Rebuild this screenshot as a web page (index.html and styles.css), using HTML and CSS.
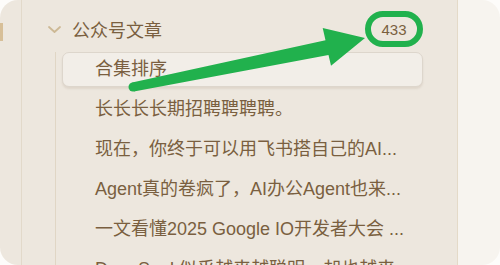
FILE: index.html
```html
<!DOCTYPE html>
<html lang="zh">
<head>
<meta charset="utf-8">
<title>公众号文章</title>
<link rel="stylesheet" href="styles.css">
</head>
<body>
<div class="window">
  <aside class="sidebar">
    <div class="rail"><span class="rail-mark"></span></div>
    <div class="tree">
      <div class="group-head">
        <svg class="chevron" width="13" height="7" viewBox="0 0 13 7"><polyline points="1,1 6.5,6 12,1" fill="none" stroke="#cdb995" stroke-width="1.8" stroke-linecap="round" stroke-linejoin="round"/></svg>
        <span class="group-title">公众号文章</span>
        <span class="count">433</span>
      </div>
      <ul class="children">
        <li class="item selected">合集排序</li>
        <li class="item">长长长长期招聘聘聘聘。</li>
        <li class="item">现在，你终于可以用飞书搭自己的AI...</li>
        <li class="item">Agent真的卷疯了，AI办公Agent也来...</li>
        <li class="item">一文看懂2025 Google IO开发者大会 ...</li>
        <li class="item">DeepSeek似乎越来越聪明，却也越来...</li>
      </ul>
    </div>
  </aside>
  <div class="main"></div>
  <svg class="annotation" width="500" height="265" viewBox="0 0 500 265">
    <rect x="368" y="14" width="52" height="30" rx="15" ry="15" fill="none" stroke="#21b14d" stroke-width="6"/>
    <path d="M132.1,82.6 L325.5,40.3 L322.7,28 L365,38 L331,65.7 L328.5,54.9 L133.9,91.4 Z" fill="#21b14d"/>
    <circle cx="133" cy="87" r="4.5" fill="#21b14d"/>
  </svg>
</div>
</body>
</html>
```

FILE: styles.css
```css
html, body {
  margin: 0;
  padding: 0;
  background: #fdfcfa;
}

.window {
  position: relative;
  width: 500px;
  height: 265px;
  display: flex;
  border-radius: 18px;
  overflow: hidden;
  font-family: "Liberation Sans", "Noto Sans CJK SC", sans-serif;
  color: #7a5f40;
}

.sidebar {
  width: 457px;
  flex: none;
  display: flex;
  background: #ede7de;
  border-right: 1px solid #e4dac8;
}

.rail {
  width: 21px;
  flex: none;
  border-right: 1px solid #e2d9ca;
}

.rail-mark {
  display: block;
  width: 3px;
  height: 18px;
  margin-top: 23px;
  background: #d7bf98;
}

.tree {
  flex: 1;
  padding-top: 9px;
}

.group-head {
  display: flex;
  align-items: center;
  width: 401px;
  height: 40px;
}

.chevron {
  margin-left: 26px;
  flex: none;
}

.group-title {
  margin-left: 11px;
  font-size: 18px;
  white-space: nowrap;
}

.count {
  margin-left: auto;
  width: 58px;
  text-align: center;
  font-size: 15px;
}

.children {
  list-style: none;
  margin: 0 0 0 33px;
  padding: 0 0 0 6px;
  width: 361px;
  border-left: 1px solid #e0d6c5;
}

.item {
  height: 40px;
  line-height: 40px;
  padding-left: 33px;
  font-size: 18px;
  white-space: nowrap;
  box-sizing: border-box;
}

.item.selected {
  height: 35px;
  line-height: 33px;
  margin: 3px 0 2px;
  padding-left: 32px;
  background: #f2eee8;
  border: 1px solid #ddd6cc;
  border-radius: 7px;
  box-shadow: 0 2px 2px rgba(120, 100, 70, 0.12);
}

.main {
  flex: 1;
  background: #f7f4ef;
}

.annotation {
  position: absolute;
  left: 0;
  top: 0;
  pointer-events: none;
}
```
